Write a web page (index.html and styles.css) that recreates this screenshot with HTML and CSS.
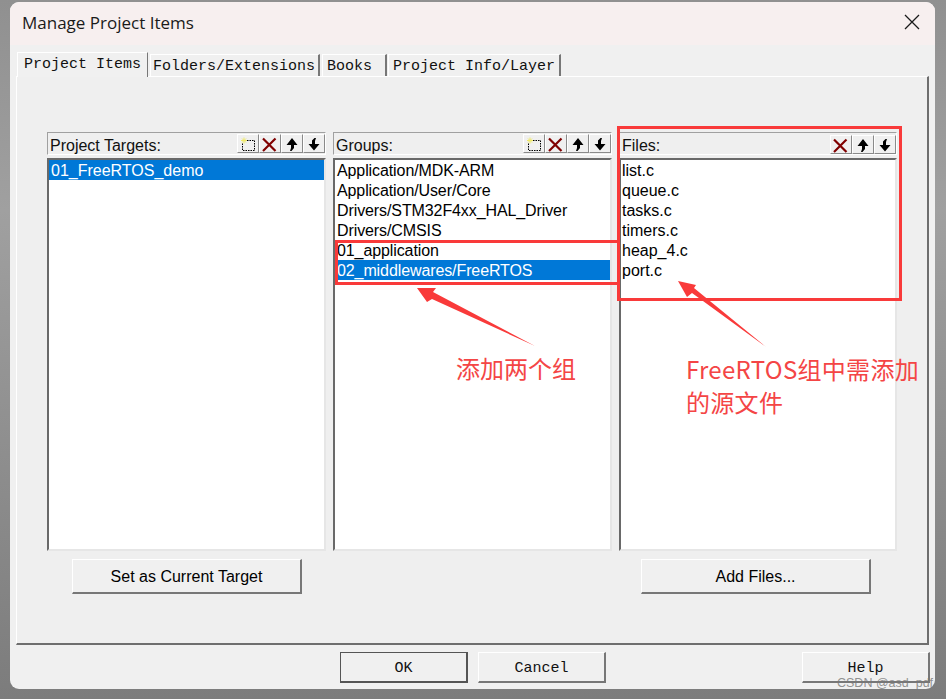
FILE: index.html
```html
<!DOCTYPE html>
<html lang="en">
<head>
<meta charset="utf-8">
<title>Manage Project Items</title>
<link rel="stylesheet" href="styles.css">
</head>
<body>
<svg class="defs" width="0" height="0" aria-hidden="true">
  <symbol id="i-new" viewBox="0 0 16 16">
    <path d="M7 4.500h7.500v10h-12v-7" fill="none" stroke="#000" stroke-dasharray="1.500 1"/>
    <path d="M4 1.500v6M1 4.500h6M2 2.500l4 4M6 2.500l-4 4" stroke="#efe96a" stroke-width="1"/>
  </symbol>
  <symbol id="i-del" viewBox="0 0 16 16">
    <path d="M1 2.500L13.500 15M13.500 2.500L1 15" stroke="#800000" stroke-width="2.200"/>
  </symbol>
  <symbol id="i-up" viewBox="0 0 16 16">
    <path d="M8 2L13.500 9H10V12L7.500 15H6L7 12V9H2.500Z" fill="#000"/>
  </symbol>
  <symbol id="i-down" viewBox="0 0 16 16">
    <path d="M8 14.500L2.500 8H6V4.500L8.500 2H10L9 5V8H13.500Z" fill="#000"/>
  </symbol>
</svg>

<div class="window">
  <header class="titlebar">
    <span class="title">Manage Project Items</span>
    <svg class="close" width="16" height="16" viewBox="0 0 16 16"><path d="M1 1L15 15M15 1L1 15" stroke="#1a1a1a" stroke-width="1.300" fill="none"/></svg>
  </header>

  <nav class="tabs">
    <span class="tab tab-active">Project Items</span>
    <span class="tab tab-folders">Folders/Extensions</span>
    <span class="tab tab-books">Books</span>
    <span class="tab tab-info">Project Info/Layer</span>
  </nav>

  <section class="panel">
    <div class="column col-targets">
      <div class="list-head">
        <span class="head-label">Project Targets:</span>
        <span class="tools">
          <span class="tool"><svg class="ico"><use href="#i-new"/></svg></span>
          <span class="tool"><svg class="ico"><use href="#i-del"/></svg></span>
          <span class="tool"><svg class="ico"><use href="#i-up"/></svg></span>
          <span class="tool"><svg class="ico"><use href="#i-down"/></svg></span>
        </span>
      </div>
      <ul class="list">
        <li class="selected">01_FreeRTOS_demo</li>
      </ul>
      <button class="btn btn-target">Set as Current Target</button>
    </div>

    <div class="column col-groups">
      <div class="list-head">
        <span class="head-label">Groups:</span>
        <span class="tools">
          <span class="tool"><svg class="ico"><use href="#i-new"/></svg></span>
          <span class="tool"><svg class="ico"><use href="#i-del"/></svg></span>
          <span class="tool"><svg class="ico"><use href="#i-up"/></svg></span>
          <span class="tool"><svg class="ico"><use href="#i-down"/></svg></span>
        </span>
      </div>
      <ul class="list">
        <li>Application/MDK-ARM</li>
        <li>Application/User/Core</li>
        <li>Drivers/STM32F4xx_HAL_Driver</li>
        <li>Drivers/CMSIS</li>
        <li>01_application</li>
        <li class="selected">02_middlewares/FreeRTOS</li>
      </ul>
    </div>

    <div class="column col-files">
      <div class="list-head">
        <span class="head-label">Files:</span>
        <span class="tools">
          <span class="tool"><svg class="ico"><use href="#i-del"/></svg></span>
          <span class="tool"><svg class="ico"><use href="#i-up"/></svg></span>
          <span class="tool"><svg class="ico"><use href="#i-down"/></svg></span>
        </span>
      </div>
      <ul class="list">
        <li>list.c</li>
        <li>queue.c</li>
        <li>tasks.c</li>
        <li>timers.c</li>
        <li>heap_4.c</li>
        <li>port.c</li>
      </ul>
      <button class="btn btn-add">Add Files...</button>
    </div>
  </section>

  <footer class="footer">
    <button class="fbtn fbtn-default">OK</button>
    <button class="fbtn">Cancel</button>
    <button class="fbtn fbtn-help">Help</button>
  </footer>
</div>

<div class="mark mark-groups"></div>
<div class="mark mark-files"></div>
<svg class="arrows" width="946" height="699" viewBox="0 0 946 699" aria-hidden="true">
  <path d="M417 288L436 288L433 292L535 346L432 299L427 302Z" fill="#f93a3a"/>
  <path d="M678 281L696 285L694 288L766 347L692 293L687 297Z" fill="#f93a3a"/>
</svg>
<div class="note note-groups">添加两个组</div>
<div class="note note-files">FreeRTOS组中需添加<br>的源文件</div>
<div class="watermark">CSDN @asd_pdf</div>
</body>
</html>
```

FILE: styles.css
```css
* { box-sizing: border-box; }

html, body {
  margin: 0;
  padding: 0;
}

body {
  position: relative;
  width: 946px;
  height: 699px;
  overflow: hidden;
  padding: 2px 10px 10px;
  background: linear-gradient(180deg, #909090 0%, #a0a0a0 30%, #7c7c7c 100%);
  font-family: "Liberation Sans", Arial, sans-serif;
}

.defs { position: absolute; }

.window {
  display: flex;
  flex-direction: column;
  width: 925px;
  height: 687px;
  background: #f0f0f0;
  border-radius: 9px;
  overflow: hidden;
}

.titlebar {
  display: flex;
  flex: none;
  align-items: center;
  justify-content: space-between;
  height: 43px;
  padding: 0 15px 2px 12px;
  background: #f7efef;
}

.title {
  font-family: "Open Sans", "Noto Sans", sans-serif;
  font-size: 17px;
  color: #1a1a1a;
}

.close { display: block; margin-bottom: 2px; }

.tabs {
  display: flex;
  flex: none;
  align-items: flex-end;
  height: 31px;
  padding-left: 7px;
  font-family: "Liberation Mono", monospace;
  font-size: 15px;
  color: #111;
}

.tab {
  display: block;
  height: 22px;
  margin-left: 2px;
  padding-left: 2px;
  padding-top: 1px;
  line-height: 21px;
  white-space: pre;
  background: #f0f0f0;
  border-top: 1px solid #fff;
  border-left: 1px solid #fff;
  border-right: 2px solid #777;
}

.tab-active {
  position: relative;
  z-index: 1;
  width: 131px;
  height: 25px;
  margin: 0 0 -1px;
  padding-left: 6px;
  padding-top: 1px;
  line-height: 21px;
  border-right-width: 1px;
}

.tab-folders { width: 170px; }
.tab-books { width: 65px; padding-left: 4px; }
.tab-info { width: 173px; margin-left: 1px; padding-left: 4px; }

.panel {
  display: flex;
  flex: none;
  gap: 7px;
  width: 913px;
  height: 569px;
  margin-left: 6px;
  padding: 55px 0 0 30px;
  background: #efefef;
  border-top: 1px solid #fff;
  border-left: 1px solid #fff;
  border-right: 2px solid #6e6e6e;
  border-bottom: 2px solid #6e6e6e;
}

.column {
  display: flex;
  flex-direction: column;
  align-items: flex-start;
  flex: none;
  width: 279px;
}

.col-files { width: 278px; }

.list-head {
  display: flex;
  flex: none;
  align-items: center;
  justify-content: space-between;
  width: 100%;
  height: 23px;
  padding-left: 2px;
  border-top: 1px solid #a0a0a0;
  border-left: 1px solid #a0a0a0;
  border-right: 1px solid #fff;
  border-bottom: 1px solid #fff;
}

.head-label {
  padding-top: 5px;
  font-size: 16px;
  color: #111;
}

.tools {
  display: flex;
  align-self: flex-start;
  margin-top: 1px;
}

.col-files .tools { margin-top: 2px; }

.tool {
  display: flex;
  align-items: center;
  justify-content: center;
  width: 22px;
  height: 19px;
  background: #f0f0f0;
  border-top: 1px solid #fff;
  border-left: 1px solid #fff;
  border-right: 1px solid #8a8a8a;
  border-bottom: 1px solid #8a8a8a;
}

.ico {
  display: block;
  width: 16px;
  height: 16px;
}

.list {
  flex: none;
  width: 100%;
  height: 393px;
  margin: 3px 0 0;
  padding: 0;
  list-style: none;
  background: #fff;
  border-top: 2px solid #696969;
  border-left: 2px solid #696969;
  border-right: 2px solid #e6e6e6;
  border-bottom: 2px solid #e6e6e6;
  font-size: 16px;
  color: #000;
}

.col-groups .list { letter-spacing: -0.1px; }

.list li {
  height: 20px;
  padding-left: 2px;
  padding-top: 1px;
  line-height: 20px;
  white-space: nowrap;
}

.col-files .list li { padding-left: 1px; }

.list .selected {
  color: #fff;
  background: #0078d7;
}

.btn {
  flex: none;
  width: 230px;
  height: 35px;
  margin-top: 8px;
  padding: 2px 0 0;
  background: #f0f0f0;
  font-family: "Liberation Sans", Arial, sans-serif;
  font-size: 16px;
  color: #000;
  border-top: 1px solid #fff;
  border-left: 1px solid #fff;
  border-right: 2px solid #777;
  border-bottom: 2px solid #777;
  border-radius: 0;
}

.btn-target { margin-left: 25px; }
.btn-add { margin-left: 22px; }

.footer {
  display: flex;
  flex: none;
  gap: 10px;
  padding: 7px 5px 0 330px;
}

.fbtn {
  width: 128px;
  height: 31px;
  padding: 2px 0 0;
  background: #f0f0f0;
  font-family: "Liberation Mono", monospace;
  font-size: 15px;
  color: #111;
  border-top: 1px solid #fff;
  border-left: 1px solid #fff;
  border-right: 2px solid #777;
  border-bottom: 2px solid #777;
  border-radius: 0;
}

.fbtn-default {
  border: 1px solid #555;
  border-right-width: 2px;
  border-bottom-width: 2px;
}

.fbtn-help { margin-left: auto; }

/* Annotations drawn over the screenshot */
.mark {
  position: absolute;
  border: 3px solid #f93a3a;
}

.mark-groups { left: 335px; top: 240px; width: 285px; height: 45px; }
.mark-files { left: 617px; top: 126px; width: 285px; height: 175px; }

.arrows {
  position: absolute;
  left: 0;
  top: 0;
}

.note {
  position: absolute;
  font-family: "Noto Sans CJK SC", "Noto Sans", sans-serif;
  font-size: 24px;
  line-height: 32px;
  color: #f44545;
}

.note-groups { left: 456px; top: 352px; }
.note-files {
  left: 686px;
  top: 352px;
  line-height: 33px;
  letter-spacing: 0.3px;
  white-space: nowrap;
}

.watermark {
  position: absolute;
  left: 837px;
  top: 675px;
  font-size: 12.500px;
  line-height: 16px;
  color: rgba(120, 120, 120, 0.8);
}
```
